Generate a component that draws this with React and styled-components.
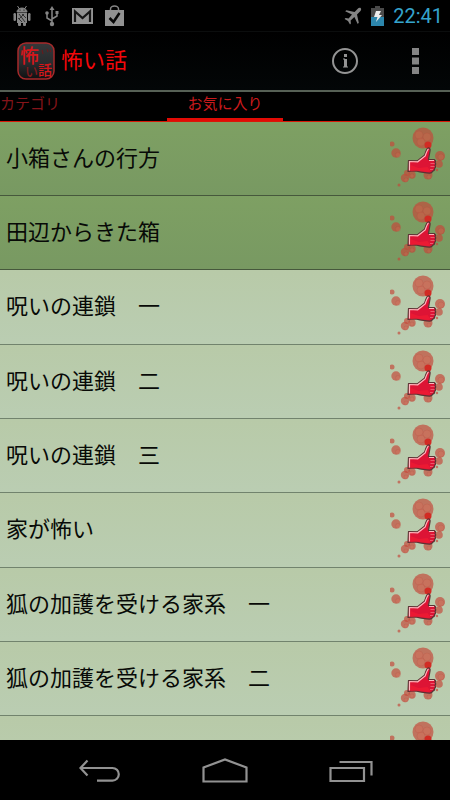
import React from "react";
import styled, { createGlobalStyle } from "styled-components";

const GlobalStyle = createGlobalStyle`
  * { box-sizing: border-box; }
  body {
    margin: 0;
    background: #000;
    font-family: Roboto, "Noto Sans CJK JP", sans-serif;
  }
  button { font: inherit; border: 0; padding: 0; background: none; cursor: pointer; }
`;

const Screen = styled.div`
  display: flex;
  flex-direction: column;
  height: 100vh;
  background: #000;
`;

const StatusBar = styled.div`
  display: flex;
  justify-content: space-between;
  align-items: center;
  flex: none;
  height: 32px;
  padding: 0 7px 0 12px;
  border-bottom: 1px solid #0b0d0d;
`;

const StatusGroup = styled.div`
  display: flex;
  align-items: center;
  gap: ${(p) => p.$gap}px;
`;

const Clock = styled.time`
  color: #35a4cd;
  font-size: 20px;
  line-height: 24px;
`;

const ActionBar = styled.header`
  display: flex;
  align-items: center;
  flex: none;
  height: 60px;
  padding: 0 15px 0 16px;
  background: linear-gradient(#000, #030607);
  border-bottom: 2px solid #566055;
`;

const Title = styled.h1`
  flex: 1;
  margin: 0 0 0 5px;
  color: #f4070a;
  font-size: 22px;
  font-weight: 400;
  line-height: 32px;
`;

const Actions = styled.div`
  display: flex;
  gap: 30px;
`;

const IconButton = styled.button`
  display: grid;
  place-items: center;
  width: 40px;
  height: 48px;
  color: #949494;
`;

const Tabs = styled.div`
  display: grid;
  grid-template-columns: 1fr 116px 1fr;
  flex: none;
  height: 30px;
  border-bottom: 1px solid #d81808;
`;

const Tab = styled.button`
  justify-self: ${(p) => (p.$active ? "stretch" : "start")};
  color: ${(p) => (p.$active ? "#c91a1c" : "#85141a")};
  font-size: 15px;
  line-height: 22px;
  padding-bottom: 3px;
  border-bottom: 3px solid ${(p) => (p.$active ? "#e20b05" : "transparent")};
`;

const List = styled.ul`
  flex: 1;
  min-height: 0;
  margin: 0;
  padding: 0;
  overflow: hidden;
  list-style: none;
`;

const Row = styled.li`
  display: flex;
  align-items: center;
  justify-content: space-between;
  height: 74px;
  border-bottom: 1px solid ${(p) => (p.$read ? "#46583c" : "#71836d")};
  background: ${(p) =>
    p.$read
      ? "linear-gradient(#7ea063, #789962)"
      : "linear-gradient(#b8caa8, #bacdb2)"};

  &:nth-child(3n) { height: 75px; }
`;

const Story = styled.button`
  flex: 1;
  align-self: stretch;
  padding-left: 6px;
  color: #080a07;
  font-size: 22px;
  line-height: 32px;
  text-align: left;
`;

const LikeButton = styled.button`
  display: block;
  flex: none;
  width: 60px;
  height: 68px;
`;

const NavBar = styled.nav`
  display: flex;
  justify-content: center;
  gap: 78px;
  flex: none;
  height: 60px;
`;

const NavButton = styled.button`
  display: grid;
  place-items: center;
  width: 48px;
  height: 60px;
`;

function DebugIcon() {
  return (
    <svg width="20" height="22" viewBox="0 0 20 22" fill="#858585" aria-hidden="true">
      <path d="M5 7a5 4 0 0 1 10 0zM5.500 1l2 3M14.500 1l-2 3" stroke="#858585" />
      <path d="M5 8h10v10H5z" />
      <rect x="1.500" y="8" width="2.500" height="8" rx="1.200" />
      <rect x="16" y="8" width="2.500" height="8" rx="1.200" />
      <rect x="6" y="17" width="3" height="4" rx="1" />
      <rect x="11" y="17" width="3" height="4" rx="1" />
      <path d="M7 9l6 8M12 9l-5 5M6 13l4 4M10 9l4 4" stroke="#333" />
      <circle cx="8" cy="5" r=".6" fill="#000" />
      <circle cx="12" cy="5" r=".6" fill="#000" />
    </svg>
  );
}

function UsbIcon() {
  return (
    <svg width="16" height="22" viewBox="0 0 16 22" fill="none" stroke="#858585" strokeWidth="1.500" aria-hidden="true">
      <path d="M8 3v16M8 16L3 13V8M8 14l5-3V7" />
      <path d="M8 1l2.500 4h-5z" fill="#858585" stroke="none" />
      <circle cx="8" cy="19" r="2.200" fill="#858585" stroke="none" />
      <circle cx="3" cy="8" r="1.800" fill="#858585" stroke="none" />
      <path d="M11.500 6h3v3h-3z" fill="#858585" stroke="none" />
    </svg>
  );
}

function MailIcon() {
  return (
    <svg width="21" height="16" viewBox="0 0 21 16" aria-hidden="true">
      <path d="M0 0h21v16H0z" fill="#929292" />
      <path d="M3 14V3.500l7.500 6.500L18 3.500V14" fill="none" stroke="#151515" strokeWidth="2.200" />
    </svg>
  );
}

function StoreIcon() {
  return (
    <svg width="19" height="22" viewBox="0 0 19 22" aria-hidden="true">
      <path d="M5.500 6V4a4 3 0 0 1 8 0v2" fill="none" stroke="#858585" strokeWidth="1.500" />
      <path d="M0 5h19v16H0z" fill="#929292" />
      <path d="M4.500 13l4 4 6-9" fill="none" stroke="#080808" strokeWidth="2.500" />
    </svg>
  );
}

function PlaneIcon() {
  return (
    <svg width="18" height="18" viewBox="0 0 18 18" fill="#858585" aria-hidden="true">
      <path d="M16.800 1.200c-1-.8-2.300-.2-3.300.8L10.600 5 2.400 3.200 1.200 4.300 8 7.600 4.600 11.400 1.500 11.100.6 12l3.400 2 2 3.400.9-.9-.3-3.100 3.800-3.400L13.700 17l1.100-1.200L13 7.500l3-3c1-1 1.600-2.400.8-3.300z" />
    </svg>
  );
}

function BatteryIcon() {
  return (
    <svg width="13" height="20" viewBox="0 0 13 20" aria-hidden="true">
      <path d="M4 0h5v2h4v9H0V2h4z" fill="#4a4a4a" />
      <path d="M0 11h13v9H0z" fill="#2c86ac" />
      <path d="M5 5h5L8 9h3l-6 7 1.500-5H3z" fill="#eee" />
    </svg>
  );
}

function AppLogo() {
  return (
    <svg width="40" height="40" viewBox="0 0 40 40" aria-hidden="true">
      <defs>
        <linearGradient id="logoFace" x2="0" y2="1">
          <stop offset="0" stopColor="#35383a" />
          <stop offset=".55" stopColor="#292c2e" />
          <stop offset="1" stopColor="#101112" />
        </linearGradient>
      </defs>
      <rect x="2" y="2" width="36" height="36" rx="8" fill="url(#logoFace)" stroke="#a62a2b" strokeWidth="1.500" />
      <path d="M26 9l1 4M31 8l1 3M34 9l1 2" stroke="#641c1e" strokeWidth="1.200" />
      <text fontFamily="Noto Sans CJK JP, sans-serif" fontWeight="500">
        <tspan x="4" y="22" fontSize="19" fill="#d4171b">怖</tspan>
        <tspan x="9" y="35" fontSize="13" fill="#82191c">い</tspan>
        <tspan x="22" y="34" fontSize="14" fill="#d4171b">話</tspan>
      </text>
    </svg>
  );
}

function InfoIcon() {
  return (
    <svg width="28" height="28" viewBox="0 0 28 28" fill="none" stroke="currentColor" strokeWidth="2" aria-hidden="true">
      <circle cx="14" cy="14" r="12" />
      <path d="M12 12h2M12 20h5" strokeWidth="1" />
      <path d="M14.500 12v8" strokeWidth="3" />
      <path d="M13 7h3v3h-3z" fill="currentColor" stroke="none" />
    </svg>
  );
}

function MoreIcon() {
  return (
    <svg width="7" height="26" viewBox="0 0 7 26" fill="#858585" aria-hidden="true">
      <path d="M0 0h7v7H0zM0 9.500h7v7H0zM0 19h7v7H0z" />
    </svg>
  );
}

const spots = [
  [33, 16, 10.5],
  [2, 22, 2.5],
  [6, 31, 4.7],
  [50, 34, 5],
  [49, 42, 3.8],
  [38, 53, 4.5],
  [22, 53, 3.7],
  [15, 56, 4.2],
  [17, 51, 3],
  [9, 63, 1.5],
  [47, 48, 1.2],
];

const blotches = [
  [29, 13, 4],
  [37, 15, 4],
  [31, 20, 4],
  [8, 33, 2.5],
  [51, 35, 3],
  [39, 55, 2],
  [16, 58, 2],
  [22, 54, 2],
];

function ThumbIcon() {
  return (
    <svg width="60" height="68" viewBox="0 3 60 68" aria-hidden="true">
      <g fill="#c4483a" fillOpacity=".68">
        {spots.map(([x, y, r]) => (
          <circle key={`${x}-${y}`} cx={x} cy={y} r={r} />
        ))}
      </g>
      <g fill="#ed735b" fillOpacity=".2" stroke="#a63d32" strokeOpacity=".2" strokeWidth=".7">
        {blotches.map(([x, y, r]) => (
          <circle key={`${x}-${y}`} cx={x} cy={y} r={r} />
        ))}
      </g>
      <circle cx="38" cy="23" r="3.500" fill="#d22b24" />
      <path
        d="M18.500 38.500l9 .3 7-5.500c1-3 2-6.500 3.500-7.300 1.500-.3 2.500 1 2 3l-1.500 8.500 6 .2c1.200.5 1.200 2 .5 2.700 1 1 .8 2.500 0 3 .7 1 .5 2.500-.4 3 .2 1.500-.6 2.500-1.800 2.700-.8 1.500-1.800 2.200-3.500 2-5-.2-10-1.400-13.300-2.200l-8 .6z"
        fill="#dd1435"
        stroke="#5a3435"
        strokeWidth="1.200"
        strokeLinejoin="round"
      />
      <path
        d="M19.500 48.500v-9l8.200.3 7.500-5.800c1-3 2-6 3.300-7M39 38.500h5"
        fill="none"
        stroke="#ffb6bd"
        strokeWidth="1.200"
      />
      <path d="M40.500 41.500h4M40.500 44.500h4M40 47.500h3" stroke="#ef6978" strokeWidth=".8" />
      <path d="M20.500 43l8 3 9-1 3 4-2 1-10-1-8 .5z" fill="#f51d32" fillOpacity=".6" />
    </svg>
  );
}

function BackIcon() {
  return (
    <svg width="44" height="26" viewBox="0 0 44 26" fill="none" stroke="#929292" strokeWidth="2.200" aria-hidden="true">
      <path d="M10.500 3.500L3.500 11l7 7.500M4 11h31.500a6.300 6.300 0 0 1 0 12.600H20" />
    </svg>
  );
}

function HomeIcon() {
  return (
    <svg width="48" height="26" viewBox="0 0 48 26" fill="none" stroke="#929292" strokeWidth="2.200" aria-hidden="true">
      <path d="M2.500 24.500v-14l21.500-8 21.500 8v14z" />
    </svg>
  );
}

function RecentIcon() {
  return (
    <svg width="44" height="26" viewBox="0 0 44 26" fill="none" stroke="#929292" strokeWidth="2.200" aria-hidden="true">
      <path d="M1.500 11H35v13H1.500zM10.500 5h32v13.500" />
    </svg>
  );
}

const stories = [
  { title: "小箱さんの行方", read: true },
  { title: "田辺からきた箱", read: true },
  { title: "呪いの連鎖　一" },
  { title: "呪いの連鎖　二" },
  { title: "呪いの連鎖　三" },
  { title: "家が怖い" },
  { title: "狐の加護を受ける家系　一" },
  { title: "狐の加護を受ける家系　二" },
  { title: "" },
];

export default function App() {
  return (
    <Screen lang="ja">
      <GlobalStyle />
      <StatusBar>
        <StatusGroup $gap={12}>
          <DebugIcon />
          <UsbIcon />
          <MailIcon />
          <StoreIcon />
        </StatusGroup>
        <StatusGroup $gap={9}>
          <PlaneIcon />
          <BatteryIcon />
          <Clock>22:41</Clock>
        </StatusGroup>
      </StatusBar>
      <ActionBar>
        <AppLogo />
        <Title>怖い話</Title>
        <Actions>
          <IconButton aria-label="情報"><InfoIcon /></IconButton>
          <IconButton aria-label="メニュー"><MoreIcon /></IconButton>
        </Actions>
      </ActionBar>
      <Tabs role="tablist">
        <Tab role="tab" aria-selected="false">カテゴリ</Tab>
        <Tab role="tab" aria-selected="true" $active>お気に入り</Tab>
      </Tabs>
      <List>
        {stories.map(({ title, read }, i) => (
          <Row key={i} $read={read}>
            <Story aria-label={title || "次の話"}>{title}</Story>
            <LikeButton aria-label="お気に入り"><ThumbIcon /></LikeButton>
          </Row>
        ))}
      </List>
      <NavBar>
        <NavButton aria-label="戻る"><BackIcon /></NavButton>
        <NavButton aria-label="ホーム"><HomeIcon /></NavButton>
        <NavButton aria-label="履歴"><RecentIcon /></NavButton>
      </NavBar>
    </Screen>
  );
}
